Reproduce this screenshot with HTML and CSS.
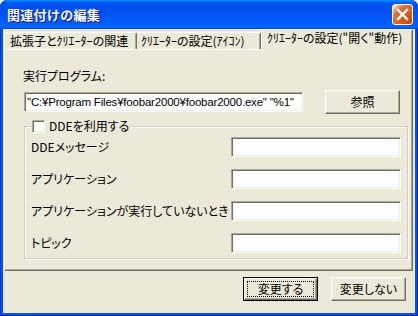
FILE: index.html
```html
<!DOCTYPE html>
<html lang="ja">
<head>
<meta charset="utf-8">
<link rel="stylesheet" href="styles.css">
</head>
<body>
<div class="window">
  <div class="titlebar">
    <span class="title">関連付けの編集</span>
    <div class="close">
      <svg width="19" height="19" viewBox="0 0 19 19"><path d="M5 5 L14 14 M14 5 L5 14" stroke="#fff" stroke-width="2.4" stroke-linecap="square"/></svg>
    </div>
  </div>
  <div class="client">
    <div class="tabs">
      <div class="tab t1">拡張子とｸﾘｴｰﾀｰの関連</div>
      <div class="tab t2">ｸﾘｴｰﾀｰの設定(ｱｲｺﾝ)</div>
      <div class="tab t3 selected">ｸﾘｴｰﾀｰの設定("開く"動作)</div>
    </div>
    <div class="panel">
      <div class="label">実行プログラム:</div>
      <div class="prog-row">
        <div class="field path">"C:¥Program Files¥foobar2000¥foobar2000.exe" "%1"</div>
        <div class="btn browse">参照</div>
      </div>
      <fieldset class="group">
        <legend class="legend"><span class="check"></span><span>DDEを利用する</span></legend>
        <div class="rows">
          <div class="row-label">DDEメッセージ</div><div class="field"></div>
          <div class="row-label">アプリケーション</div><div class="field"></div>
          <div class="row-label">アプリケーションが実行していないとき</div><div class="field"></div>
          <div class="row-label">トピック</div><div class="field"></div>
        </div>
      </fieldset>
    </div>
    <div class="footer">
      <div class="btn default"><span class="focus">変更する</span></div>
      <div class="btn">変更しない</div>
    </div>
  </div>
</div>
</body>
</html>
```
FILE: styles.css
```css
* { box-sizing: border-box; }
html, body { margin: 0; padding: 0; }
body {
  width: 418px; height: 316px; overflow: hidden;
  font-family: "Noto Sans CJK JP", "Noto Sans", sans-serif;
  font-feature-settings: "palt";
  font-size: 12px; line-height: 14px; color: #000;
  background: #fff;
}
.window {
  width: 418px; height: 316px;
  display: flex; flex-direction: column;
  background: #0055EA;
  box-shadow: inset 1px 0 #0831D9, inset -1px 0 #001EA0, inset 0 -1px #001EA0;
  border-radius: 7px 7px 0 0;
  overflow: hidden;
}
.titlebar {
  height: 29px; flex: none;
  display: flex; align-items: center;
  padding: 0 5px 0 7px;
  background: linear-gradient(#0997FF 0%, #0053EE 10%, #0050EE 40%, #0060FF 86%, #0066FF 93%, #005BFF 96%, #003DD7 100%);
  border-radius: 7px 7px 0 0;
}
.title {
  flex: 1;
  color: #fff; font-weight: bold; font-size: 13px; letter-spacing: 0.3px;
  font-feature-settings: normal;
  text-shadow: 1px 1px #0F1089;
}
.close {
  width: 21px; height: 21px;
  border: 1px solid #fff; border-radius: 3px;
  background: radial-gradient(circle at 90% 90%, #cc4600 0%, #dc6527 55%, #cd7546 70%, #ffccb2 90%, #fff 100%);
  display: flex;
}
.client {
  flex: 1;
  margin: 0 3px 3px;
  background: #ECE9D8;
  display: flex; flex-direction: column;
}
.tabs {
  height: 20px; flex: none;
  display: flex; align-items: flex-end;
  padding-left: 1px;
}
.tab {
  height: 17px;
  border-top: 1px solid #fff; border-left: 1px solid #fff;
  border-right: 1px solid #716F64;
  box-shadow: inset -1px 0 #ACA899;
  padding-left: 5px;
  line-height: 15px;
  white-space: nowrap;
  border-radius: 2px 2px 0 0;
}
.t1 { width: 133px; }
.t2 { width: 124px; padding-left: 4px; border-left: none; }
.t3 { width: 152px; }
.selected {
  height: 21px; margin-bottom: -1px;
  position: relative; z-index: 1;
  background: #ECE9D8;
  line-height: 16px;
}
.panel {
  height: 222px; flex: none;
  margin: 0 2px 0 1px;
  border: 1px solid; border-color: #fff #716F64 #716F64 #fff;
  box-shadow: inset -1px -1px #ACA899;
  padding: 19px 0 0 18px;
}
.label { height: 14px; }
.prog-row {
  display: flex; align-items: flex-start;
  margin-top: 7px; margin-left: 1px;
}
.field {
  height: 20px;
  border: 1px solid; border-color: #ACA899 #fff #fff #ACA899;
  box-shadow: inset 1px 1px #716F64, inset -1px -1px #F1EFE2;
  background: #fff;
}
.path {
  width: 279px; margin-top: 2px; flex: none;
  padding: 0 0 0 2px;
  font-family: "Liberation Sans", "Noto Sans CJK JP", sans-serif;
  font-size: 11.5px; letter-spacing: -0.2px;
  line-height: 18px;
  white-space: nowrap; overflow: hidden;
}
.btn {
  width: 75px; height: 24px; flex: none;
  border: 1px solid; border-color: #fff #716F64 #716F64 #fff;
  box-shadow: inset -1px -1px #ACA899, inset 1px 1px #F1EFE2;
  background: #ECE9D8;
  display: flex; align-items: center; justify-content: center;
}
.browse { margin-left: 22px; }
.group {
  margin: 5px 0 0 1px;
  width: 384px;
  padding: 4px 6px 5px 6px;
  border: 1px solid #D0D0BF;
  box-shadow: inset 1px 1px #fff, 1px 1px #fff;
  min-width: 0;
}
.legend {
  display: flex; align-items: center; gap: 4px;
  padding: 0 1px 0 0; margin-left: 1px;
  height: 14px;
  background: #ECE9D8;
}
.check {
  width: 13px; height: 13px;
  border: 1px solid; border-color: #ACA899 #fff #fff #ACA899;
  box-shadow: inset 1px 1px #716F64, inset -1px -1px #F1EFE2;
  background: #fff;
}
.rows {
  display: grid;
  grid-template-columns: minmax(0, 1fr) 170px;
  grid-auto-rows: 20px;
  row-gap: 12px;
  align-items: center;
}
.row-label { white-space: nowrap; }
.footer {
  flex: 1;
  display: flex; justify-content: flex-end; align-items: flex-start;
  gap: 13px;
  padding: 6px 9px 0 0;
}
.default {
  border: 1px solid #000;
  box-shadow: inset 1px 1px #fff, inset -1px -1px #716F64, inset -2px -2px #ACA899;
  padding: 3px;
}
.focus {
  flex: 1; align-self: stretch;
  border: 1px dotted #000;
  display: flex; align-items: center; justify-content: center;
}
```
